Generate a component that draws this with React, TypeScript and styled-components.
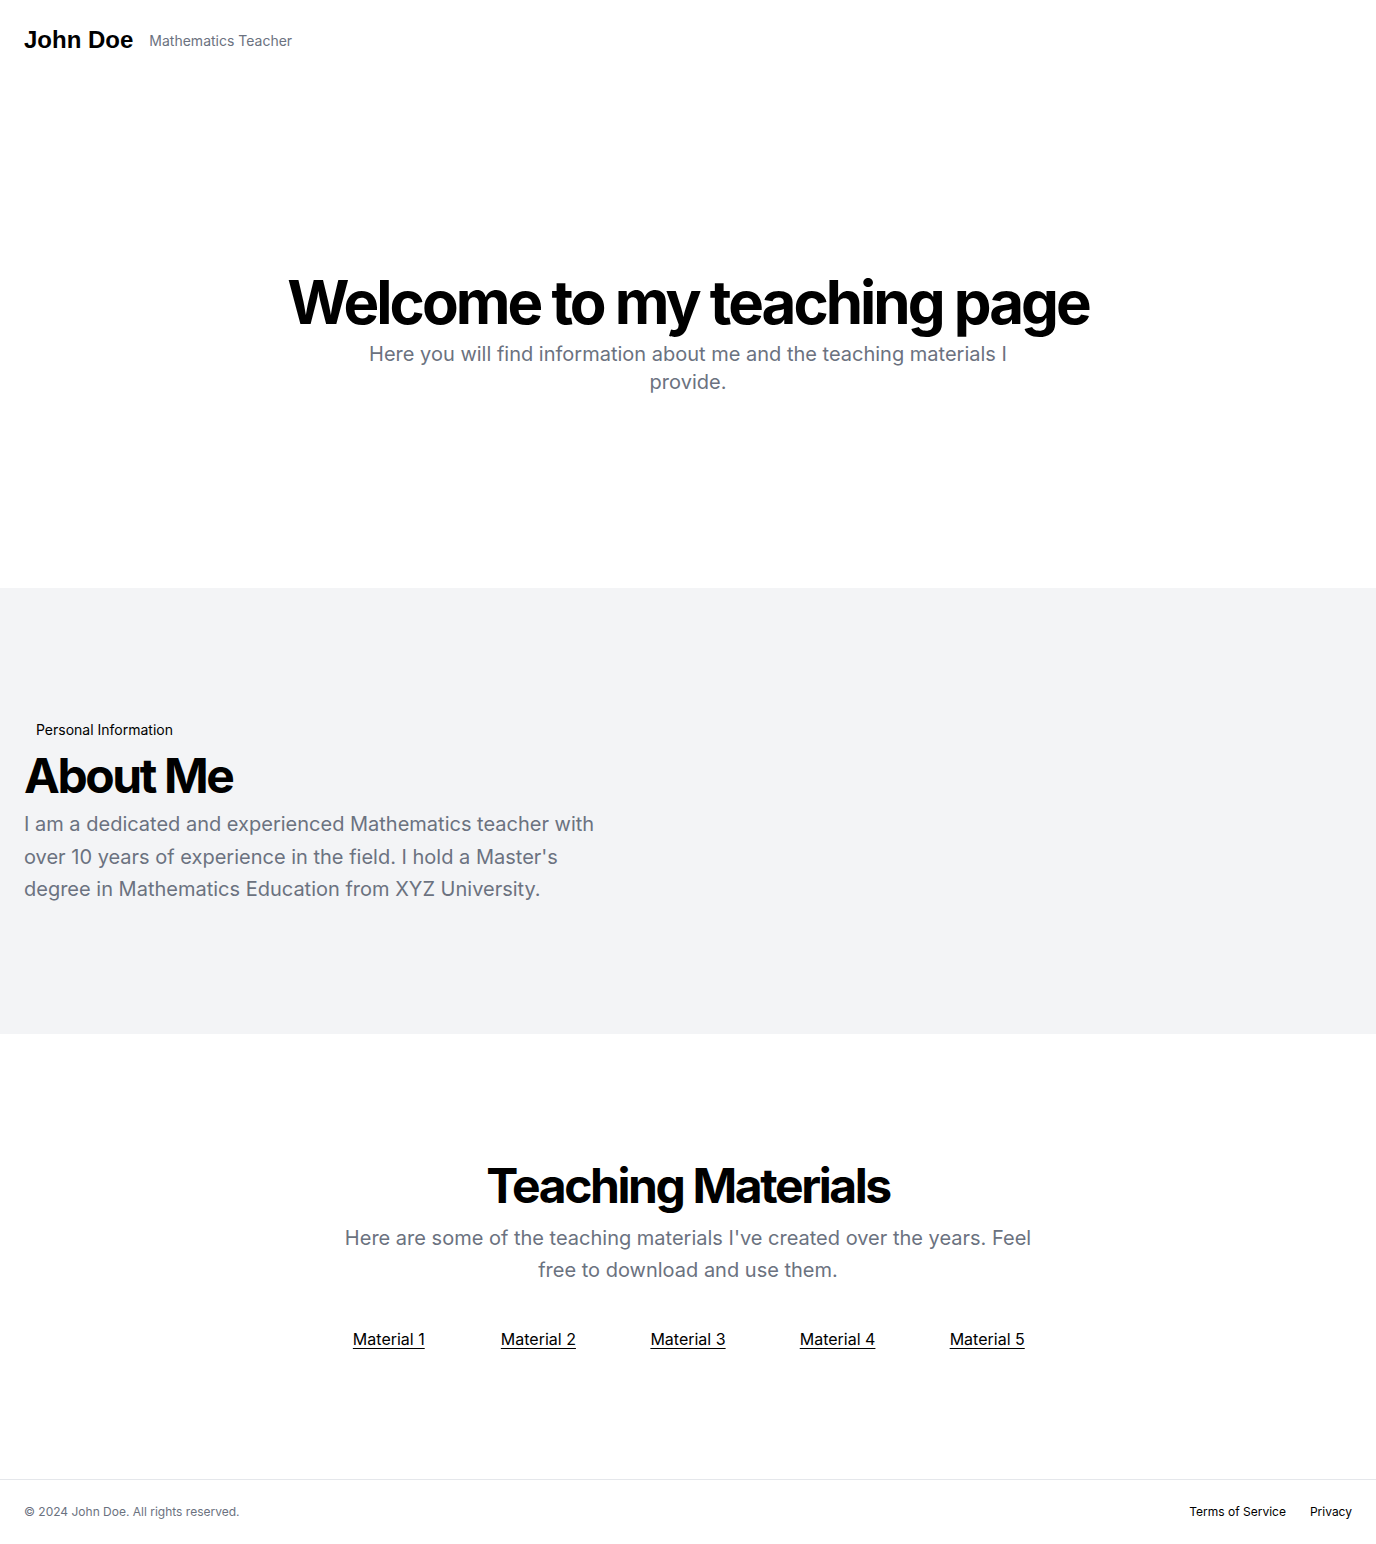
import {FC} from 'react';
import styled, {createGlobalStyle} from 'styled-components';

const GlobalStyle = createGlobalStyle`
  * {
    box-sizing: border-box;
  }

  body {
    margin: 0;
    background: #ffffff;
    color: #000000;
    font-family: Inter, 'Noto Sans', sans-serif;
  }
`;

const Page = styled.div`
  display: flex;
  flex-direction: column;
  min-height: 1544px;
`;

const Header = styled.header`
  display: flex;
  align-items: center;
  height: 80px;
  padding: 0 24px;
`;

const Brand = styled.span`
  font-family: 'Liberation Sans', Arial, sans-serif;
  font-size: 24px;
  font-weight: 700;
  color: #000000;
`;

const Role = styled.span`
  margin-left: 16px;
  font-size: 14px;
  color: #6b7280;
`;

const Main = styled.main`
  flex: 1;
`;

const Section = styled.section<{$muted?: boolean; $pad: number}>`
  padding: ${({$pad}) => `${$pad}px 24px`};
  background: ${({$muted}) => ($muted ? '#f3f4f6' : '#ffffff')};
`;

const Centered = styled.div`
  display: flex;
  flex-direction: column;
  align-items: center;
  text-align: center;
`;

const Stack = styled.div`
  display: flex;
  flex-direction: column;
  align-items: flex-start;
`;

const Title = styled.h1<{$size: number}>`
  margin: 0;
  font-size: ${({$size}) => $size}px;
  line-height: 1;
  font-weight: 700;
  letter-spacing: -0.05em;
`;

const Lead = styled.p<{$lh: number; $max: number; $gap: number}>`
  margin: ${({$gap}) => $gap}px 0 0;
  max-width: ${({$max}) => $max}px;
  font-size: 20px;
  line-height: ${({$lh}) => $lh}px;
  color: #6b7280;
`;

const Badge = styled.span`
  display: inline-block;
  margin-bottom: 8px;
  padding: 4px 12px;
  border-radius: 8px;
  background: #f3f4f6;
  font-size: 14px;
  line-height: 20px;
  color: #000000;
`;

const MaterialGrid = styled.div`
  display: grid;
  grid-template-columns: repeat(5, 1fr);
  width: 748px;
  margin: 40px auto 0;
  justify-items: center;
`;

const MaterialLink = styled.a`
  font-size: 16px;
  line-height: 24px;
  color: #000000;
  text-decoration: underline;
  text-underline-offset: 3px;
`;

const Footer = styled.footer`
  display: flex;
  align-items: center;
  padding: 24px;
  border-top: 1px solid #e5e7eb;
  font-size: 12px;
  line-height: 16px;
`;

const Copyright = styled.p`
  margin: 0;
  color: #6b7280;
`;

const FooterNav = styled.nav`
  display: flex;
  gap: 24px;
  margin-left: auto;

  a {
    color: #000000;
    text-decoration: none;
  }
`;

const materials = ['Material 1', 'Material 2', 'Material 3', 'Material 4', 'Material 5'];

const App: FC = () => (
  <Page>
    <GlobalStyle />
    <Header>
      <Brand>John Doe</Brand>
      <Role>Mathematics Teacher</Role>
    </Header>
    <Main>
      <Section $pad={192}>
        <Centered>
          <Title $size={60}>Welcome to my teaching page</Title>
          <Lead $lh={28} $max={700} $gap={8}>
            Here you will find information about me and the teaching materials I provide.
          </Lead>
        </Centered>
      </Section>
      <Section $muted $pad={128}>
        <Stack>
          <Badge>Personal Information</Badge>
          <Title $size={48}>About Me</Title>
          <Lead $lh={32.5} $max={600} $gap={8}>
            I am a dedicated and experienced Mathematics teacher with over 10 years of experience in
            the field. I hold a Master's degree in Mathematics Education from XYZ University.
          </Lead>
        </Stack>
      </Section>
      <Section $pad={128}>
        <Centered>
          <Title $size={48}>Teaching Materials</Title>
          <Lead $lh={32.5} $max={700} $gap={12}>
            Here are some of the teaching materials I've created over the years. Feel free to
            download and use them.
          </Lead>
        </Centered>
        <MaterialGrid>
          {materials.map((m) => (
            <MaterialLink key={m} href="#">
              {m}
            </MaterialLink>
          ))}
        </MaterialGrid>
      </Section>
    </Main>
    <Footer>
      <Copyright>© 2024 John Doe. All rights reserved.</Copyright>
      <FooterNav>
        <a href="#">Terms of Service</a>
        <a href="#">Privacy</a>
      </FooterNav>
    </Footer>
  </Page>
);

export default App;
